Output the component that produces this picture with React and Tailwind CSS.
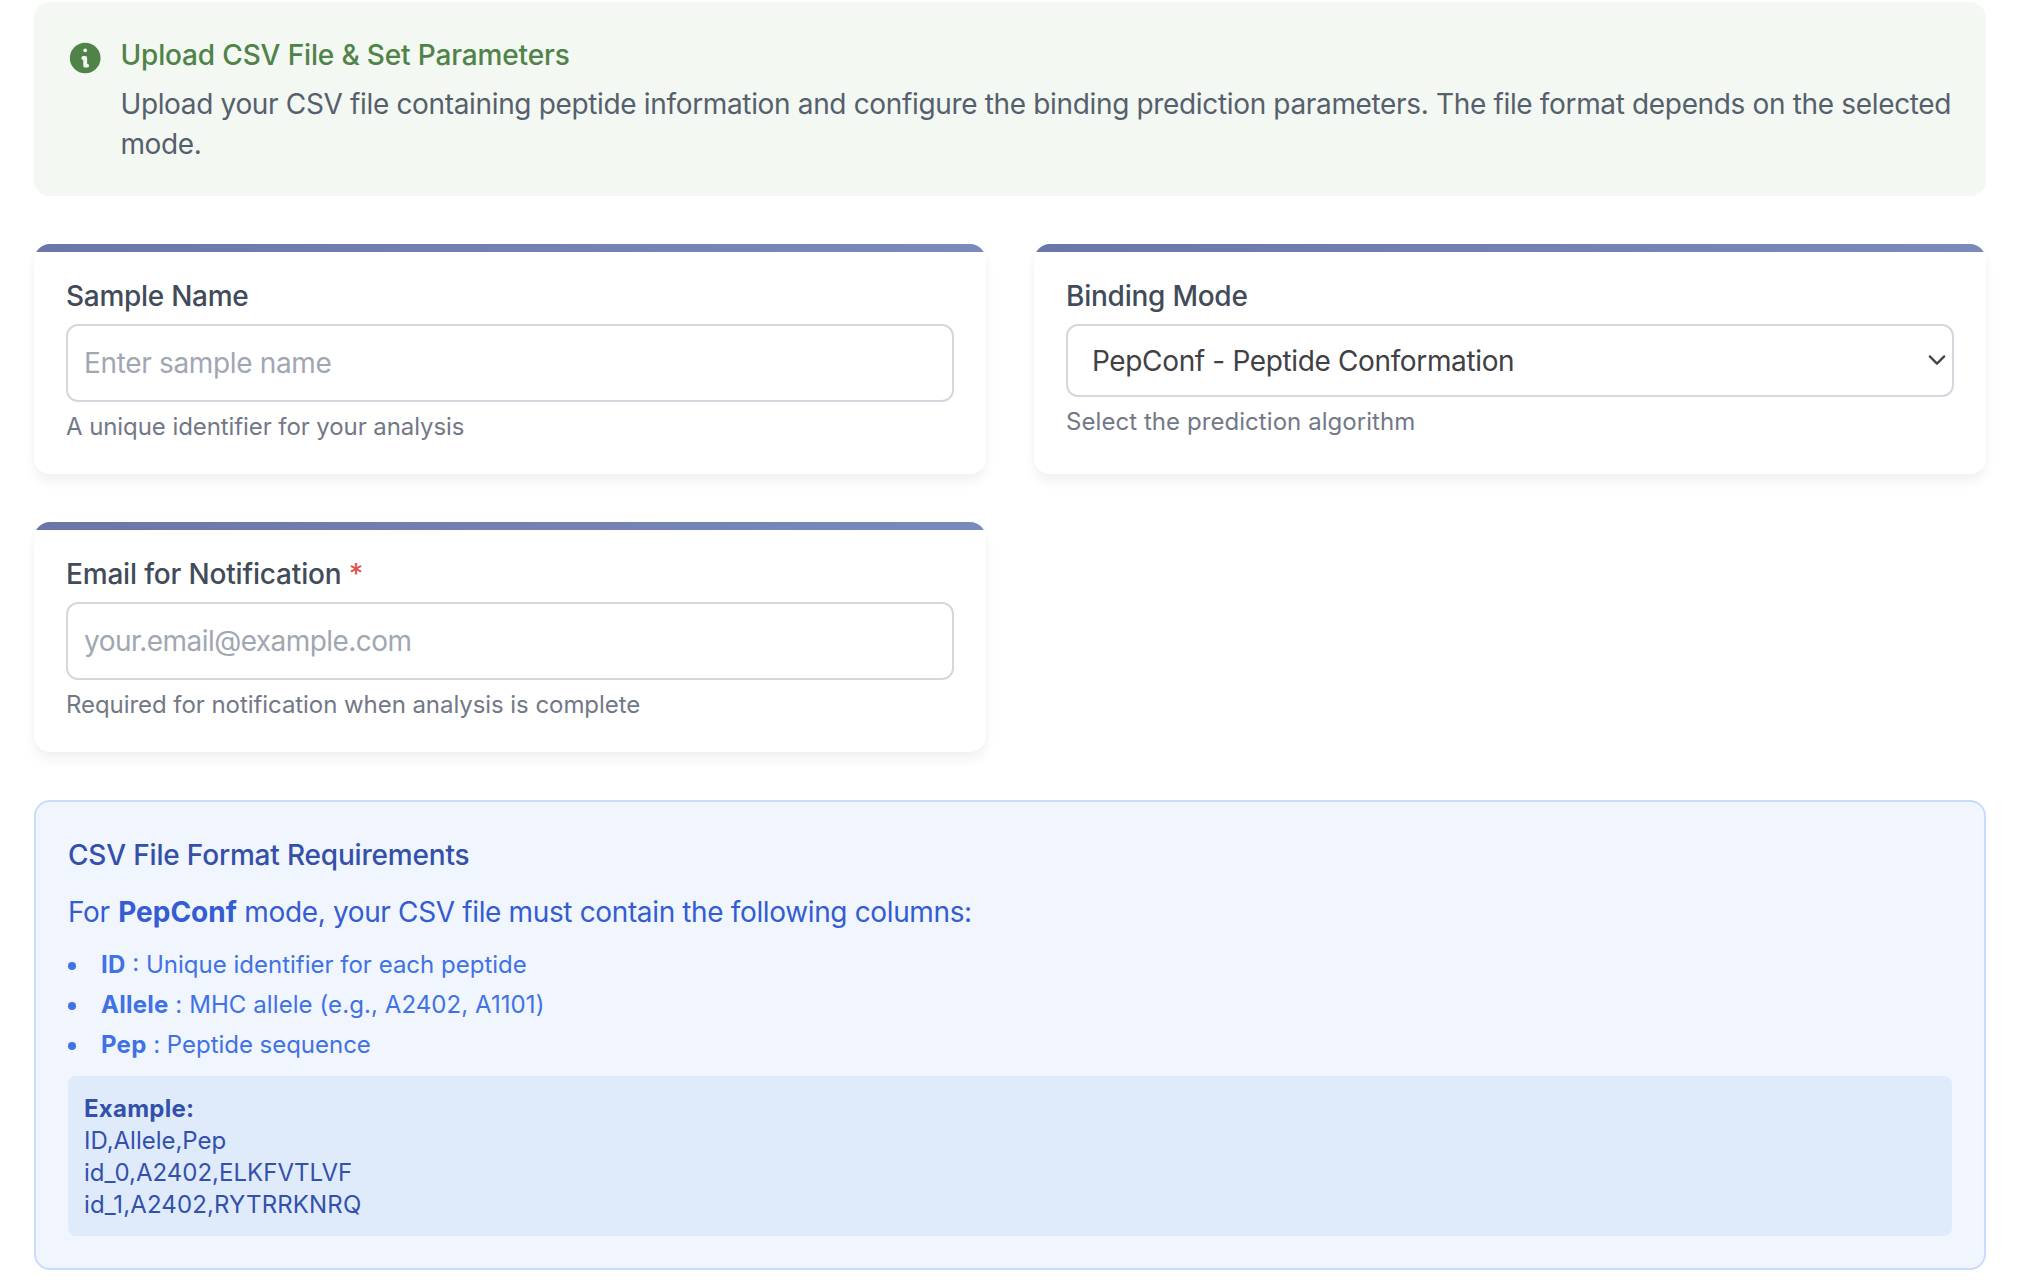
import React from "react";

function Card({ label, labelClass, required, help, helpClass, children }) {
  return (
    <div className="overflow-hidden rounded-2xl bg-white shadow-[0_8px_12px_rgba(0,0,0,0.05),0_0_10px_rgba(0,0,0,0.02)]">
      <div className="h-2 bg-[linear-gradient(135deg,#6a76a7_0%,#7a8abd_100%)]" />
      <div className="px-8 pt-6 pb-[31px]">
        <label className={`mb-2 block text-[28px]/10 font-medium text-[#414b5a] ${labelClass}`}>
          {label}
          {required && <span className="text-[#e0524c]"> *</span>}
        </label>
        {children}
        <p className={`mt-[9px] text-2xl/8 text-[#727886] ${helpClass}`}>{help}</p>
      </div>
    </div>
  );
}

function TextInput({ className, ...props }) {
  return (
    <input
      {...props}
      className={`block h-[78px] w-full rounded-xl border-2 border-[#d4d7de] bg-white px-4 text-[28px] text-[#404045] outline-none placeholder:text-[#a1a7b2] ${className}`}
    />
  );
}

const columns = [
  { name: "ID", text: "Unique identifier for each peptide", tracking: "tracking-[0px]" },
  { name: "Allele", text: "MHC allele (e.g., A2402, A1101)", tracking: "tracking-[0.08px]" },
  { name: "Pep", text: "Peptide sequence", tracking: "tracking-[-0.03px]" },
];

export default function App() {
  return (
    <main className="flex h-[1288px] flex-col gap-12 bg-white px-[34px] pt-0.5 pr-8 font-['Inter',sans-serif]">
      <section className="flex w-[1952px] gap-4 rounded-2xl bg-[#f3f8f2] p-8 pr-7">
        <svg viewBox="0 0 20 20" className="mt-1 h-10 w-[38.4px] shrink-0 fill-[#4f8347]">
          <path
            fillRule="evenodd"
            clipRule="evenodd"
            d="M18 10a8 8 0 11-16 0 8 8 0 0116 0zm-7-4a1 1 0 11-2 0 1 1 0 012 0zM9 9a1 1 0 000 2v3a1 1 0 001 1h1a1 1 0 100-2v-3a1 1 0 00-1-1H9z"
          />
        </svg>
        <div>
          <h3 className="mb-2 text-[28px]/[42px] font-medium tracking-[-0.15px] text-[#4f8347]">
            Upload CSV File &amp; Set Parameters
          </h3>
          <p className="text-[28px]/10 tracking-[-0.343px] text-[#565f6d]">
            Upload your CSV file containing peptide information and configure the binding prediction
            parameters. The file format depends on the selected mode.
          </p>
        </div>
      </section>

      <section className="grid w-[1952px] grid-cols-2 gap-12">
        <Card
          label="Sample Name"
          labelClass="tracking-[-0.28px]"
          help="A unique identifier for your analysis"
          helpClass="tracking-[-0.08px]"
        >
          <TextInput type="text" placeholder="Enter sample name" className="tracking-[-0.34px]" />
        </Card>

        <Card
          label="Binding Mode"
          labelClass="tracking-[-0.24px]"
          help="Select the prediction algorithm"
          helpClass="tracking-[0.06px]"
        >
          <div className="relative">
            <select className="block h-[73px] w-full appearance-none rounded-xl border-2 border-[#d4d7de] bg-white px-6 text-[28px] tracking-[-0.36px] text-[#404045] outline-none">
              <option>PepConf - Peptide Conformation</option>
            </select>
            <svg
              viewBox="0 0 18 12"
              className="pointer-events-none absolute top-[30px] right-2 h-3 w-[18px] fill-none stroke-[#404045] stroke-[2.2]"
            >
              <path d="M1.800 2.400L9 9.600l7.200-7.200" strokeLinecap="round" strokeLinejoin="round" />
            </svg>
          </div>
        </Card>

        <Card
          label="Email for Notification"
          labelClass="tracking-[-0.18px]"
          required
          help="Required for notification when analysis is complete"
          helpClass="tracking-[-0.06px]"
        >
          <TextInput
            type="email"
            placeholder="your.email@example.com"
            className="tracking-[-0.54px]"
          />
        </Card>
      </section>

      <section className="w-[1952px] rounded-2xl border-2 border-[#c8ddfb] bg-[#f1f5fe] p-8">
        <h4 className="mb-4 text-[28px]/[42px] font-medium tracking-[-0.18px] text-[#3350ab]">
          CSV File Format Requirements
        </h4>
        <p className="mb-[17px] text-[28px]/10 tracking-[-0.36px] text-[#335dd0]">
          For <strong className="ml-px font-bold tracking-[-0.01px]">PepConf</strong> mode, your CSV
          file must contain the following columns:
        </p>
        <ul className="mb-[15px] flex flex-col gap-2 text-2xl/8 text-[#4072e6]">
          {columns.map((c) => (
            <li key={c.name} className="flex items-center">
              <span className="mt-0.5 mr-[25px] size-2 rounded-full bg-[#4072e6]" />
              <span className={c.tracking}>
                <strong className="font-bold tracking-[0.25px]">{c.name}</strong> : {c.text}
              </span>
            </li>
          ))}
        </ul>
        <div className="rounded-lg bg-[#dfebfb] px-4 pt-[17px] pb-[15px] text-2xl/8 text-[#3350ab]">
          <p className="font-bold tracking-[0.25px]">Example:</p>
          <p className="tracking-[-0.02px]">ID,Allele,Pep</p>
          <p className="tracking-[0.02px]">id_0,A2402,ELKFVTLVF</p>
          <p className="tracking-[0.14px]">id_1,A2402,RYTRRKNRQ</p>
        </div>
      </section>
    </main>
  );
}
